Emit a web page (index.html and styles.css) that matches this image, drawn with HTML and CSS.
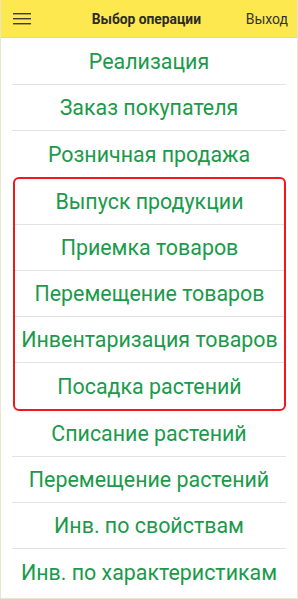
FILE: index.html
```html
<!DOCTYPE html>
<html lang="ru">
<head>
<meta charset="utf-8">
<link rel="stylesheet" href="styles.css">
</head>
<body>
<div class="app">
  <header class="bar">
    <button class="menu" aria-label="Меню">
      <svg width="18" height="12" viewBox="0 0 18 12"><rect x="0" y="0" width="18" height="1.4" fill="#3a3a3a"/><rect x="0" y="5" width="18" height="1.4" fill="#3a3a3a"/><rect x="0" y="10" width="18" height="1.4" fill="#3a3a3a"/></svg>
    </button>
    <div class="title">Выбор операции</div>
    <div class="exit">Выход</div>
  </header>
  <main class="list">
    <div class="item">Реализация</div>
    <div class="item">Заказ покупателя</div>
    <div class="item last">Розничная продажа</div>
    <div class="group">
      <div class="item">Выпуск продукции</div>
      <div class="item">Приемка товаров</div>
      <div class="item">Перемещение товаров</div>
      <div class="item">Инвентаризация товаров</div>
      <div class="item last">Посадка растений</div>
    </div>
    <div class="item">Списание растений</div>
    <div class="item">Перемещение растений</div>
    <div class="item">Инв. по свойствам</div>
    <div class="item last">Инв. по характеристикам</div>
  </main>
</div>
</body>
</html>
```
FILE: styles.css
```css
* { box-sizing: border-box; }
html, body { margin: 0; padding: 0; background: #fff; }
body { font-family: Roboto, "Noto Sans", sans-serif; }
.app {
  width: 298px;
  height: 599px;
  display: flex;
  flex-direction: column;
  border: 1px solid #ebe6c7;
  border-top: none;
  overflow: hidden;
}
.bar {
  height: 38px;
  flex: none;
  background: #fde84f;
  border-bottom: 1px solid #dcd6a4;
  display: flex;
  align-items: center;
  margin: 0 -1px 1px;
  padding: 0 10px 0 13px;
}
.menu {
  border: none;
  background: none;
  padding: 0;
  width: 18px;
  height: 12px;
  display: flex;
}
.title {
  flex: 1;
  text-align: center;
  font-weight: bold;
  font-size: 13.8px;
  color: #2b2b2b;
  padding-left: 16px;
}
.exit {
  font-size: 14px;
  color: #333;
}
.list {
  display: flex;
  flex-direction: column;
  padding: 0 11px;
}
.item {
  height: 46px;
  flex: none;
  display: flex;
  align-items: center;
  justify-content: center;
  font-size: 21.4px;
  color: #1a9a4a;
  border-bottom: 1px solid #e3e3e3;
  white-space: nowrap;
}
.item.last { border-bottom: none; }
.group {
  border: 2px solid #f01818;
  border-radius: 6px;
  margin: 0 0 0 1px;
}
```
